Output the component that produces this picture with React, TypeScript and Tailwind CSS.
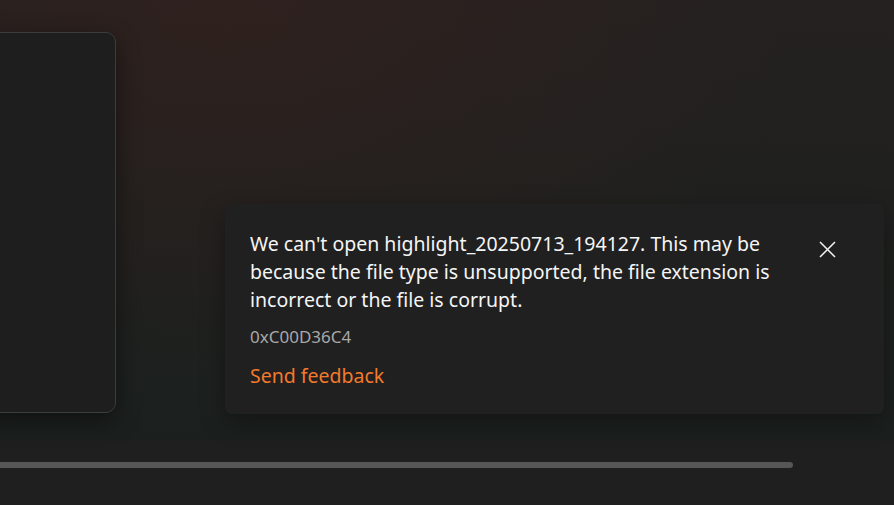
import React from "react";

function CloseIcon() {
  return (
    <svg width="17" height="17" viewBox="0 0 17 17" fill="none">
      <path d="M1 1 L16 16 M16 1 L1 16" stroke="#f2f2f2" strokeWidth="1.5" />
    </svg>
  );
}

export default function App() {
  return (
    <div
      className="w-[894px] h-[505px] flex flex-col overflow-hidden bg-[#1e1f1e]"
      style={{ fontFamily: '"Noto Sans", "Open Sans", sans-serif' }}
    >
      <div className="h-[440px] flex items-start bg-[radial-gradient(ellipse_at_25%_0%,rgba(60,32,28,0.45),transparent_60%),linear-gradient(180deg,#242120_0%,#1b201e_100%)]">
        <div className="-ml-[20px] mt-[32px] w-[136px] h-[381px] shrink-0 rounded-[10px] border border-[#3c3c3a] bg-[#1f1e1e] shadow-[0_8px_24px_rgba(0,0,0,0.45)]" />
        <div className="ml-[109px] mt-[204px] w-[659px] h-[210px] shrink-0 rounded-[7px] bg-[#202020] shadow-[0_8px_24px_rgba(0,0,0,0.35)] flex pl-[25px] pr-[48px] pt-[26px]">
          <div className="flex-1 flex flex-col">
            <p className="text-[19.5px] leading-[28px] text-[#f5f5f5] w-[540px]">
              We can't open highlight_20250713_194127. This may be because the file type is unsupported, the file extension is incorrect or the file is corrupt.
            </p>
            <p className="mt-[12px] text-[17px] leading-[22px] text-[#a8a8a8]">0xC00D36C4</p>
            <p className="mt-[14px] text-[19.5px] leading-[28px] text-[#f4792b]">Send feedback</p>
          </div>
          <div className="mt-[11px] shrink-0">
            <CloseIcon />
          </div>
        </div>
      </div>
      <div className="pt-[22px]">
        <div className="w-[793px] h-[6px] rounded-r-[3px] bg-[#555655]" />
      </div>
    </div>
  );
}
